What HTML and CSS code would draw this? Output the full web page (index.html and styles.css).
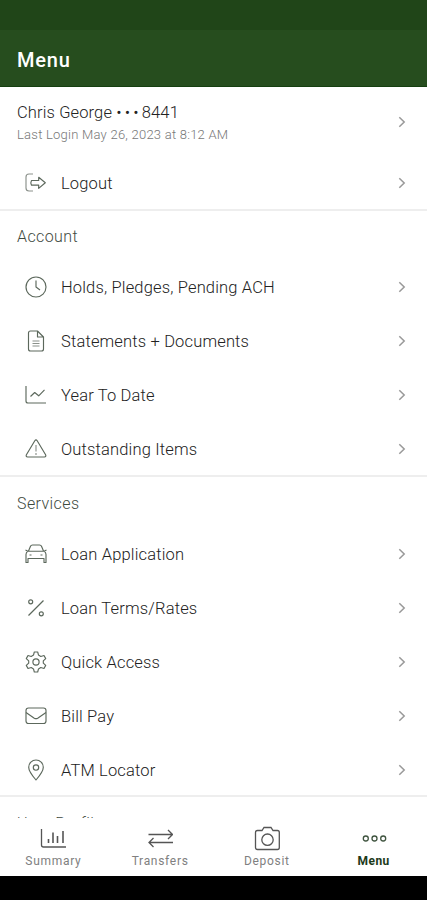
FILE: index.html
```html
<!DOCTYPE html>
<html lang="en">
<head>
<meta charset="utf-8">
<title>Menu</title>
<link rel="stylesheet" href="styles.css">
</head>
<body>
<svg class="defs" width="0" height="0">
  <symbol id="chev" viewBox="0 0 8 12"><path d="M1.3 1.2 6.2 6 1.3 10.8"/></symbol>
</svg>
<div class="app">
  <div class="status"></div>
  <header class="bar"><h1>Menu</h1></header>
  <main class="content">
    <section class="first">
      <div class="user">
        <div class="who"><p class="name">Chris George <span class="dots">•••</span>8441</p><p class="login">Last Login May 26, 2023 at 8:12 AM</p></div>
        <svg class="chev"><use href="#chev"/></svg>
      </div>
      <div class="row"><svg class="icon" viewBox="0 0 22 22"><path class="soft" d="M8 2H4Q1 2 1 5v11q0 3 3 3h4"/><path d="M6.5 8.5h7.2V5.2l6.6 5.6-6.6 5.6v-3.3H6.5q-1.3-2.3 0-4.6z"/></svg><span class="label">Logout</span><svg class="chev"><use href="#chev"/></svg></div>
    </section>
    <section class="account">
      <h2>Account</h2>
      <div class="row"><svg class="icon" viewBox="0 0 22 22"><circle cx="11" cy="11" r="10"/><path d="M11 4.5V11l4 3"/></svg><span class="label">Holds, Pledges, Pending ACH</span><svg class="chev"><use href="#chev"/></svg></div>
      <div class="row"><svg class="icon" viewBox="0 0 22 22"><path d="M12.5 1H5.5Q3.5 1 3.5 3v16q0 2 2 2h11q2 0 2-2V7zM12.5 1v6h6"/><path class="soft" d="M7.5 11h7M7.5 13.5h7M7.5 16h7"/></svg><span class="label">Statements + Documents</span><svg class="chev"><use href="#chev"/></svg></div>
      <div class="row"><svg class="icon" viewBox="0 0 22 22"><path d="M1 2v15q0 2 2 2h18M5.5 12.5l4.2-4 4 3.3 5.8-6"/></svg><span class="label">Year To Date</span><svg class="chev"><use href="#chev"/></svg></div>
      <div class="row"><svg class="icon" viewBox="0 0 22 22"><path d="M9.8 2.7q1.2-1.8 2.4 0l8.4 14q.9 2.1-1.2 2.3H2.6q-2.1-.2-1.2-2.3z"/><path class="soft" d="M11 7v6.5M11 15v2"/></svg><span class="label">Outstanding Items</span><svg class="chev"><use href="#chev"/></svg></div>
    </section>
    <section class="services">
      <h2>Services</h2>
      <div class="row"><svg class="icon" viewBox="0 0 22 22"><path d="M3.500 8 5.500 3.200Q6 2 7.500 2h7q1.500 0 2 1.200L18.500 8M.5 7 3 8.200h16L21.500 7M3 8.200q-2 .8-2 3.300V19.500h2V15.500h16v4h2V11.500q0-2.500-2-3.300M4.500 12h2M15.500 12h2"/></svg><span class="label">Loan Application</span><svg class="chev"><use href="#chev"/></svg></div>
      <div class="row"><svg class="icon" viewBox="0 0 22 22"><path d="M18.500 3.500 3.500 18.500"/><circle cx="5.700" cy="4.800" r="2"/><circle cx="16.300" cy="16.800" r="2"/></svg><span class="label">Loan Terms/Rates</span><svg class="chev"><use href="#chev"/></svg></div>
      <div class="row"><svg class="icon" viewBox="0 0 22 22"><path d="M9.300 1h3.400l.8 3.100 2.300 1.400 3.200-1L20.700 7.600 18.300 9.800v2.400l2.400 2.200L19 17.500l-3.200-1-2.300 1.400-.8 3.100H9.300l-.8-3.100-2.300-1.400-3.200 1L1.300 14.400l2.400-2.200V9.800L1.300 7.600 3 4.500l3.200 1 2.300-1.400z"/><circle cx="11" cy="11" r="3.100"/></svg><span class="label">Quick Access</span><svg class="chev"><use href="#chev"/></svg></div>
      <div class="row"><svg class="icon" viewBox="0 0 22 22"><rect x="1" y="3" width="20" height="15.500" rx="2.500"/><path d="M1 7.500l8.300 5.700q1.700 1 3.400 0L21 7.500"/></svg><span class="label">Bill Pay</span><svg class="chev"><use href="#chev"/></svg></div>
      <div class="row"><svg class="icon" viewBox="0 0 22 22"><path d="M11 21Q3.700 12.500 3.700 8.200a7.300 7.200 0 0 1 14.600 0Q18.300 12.500 11 21z"/><circle cx="11" cy="8.500" r="2.700"/></svg><span class="label">ATM Locator</span><svg class="chev"><use href="#chev"/></svg></div>
    </section>
    <section><h2>User Profile</h2></section>
  </main>
  <nav class="tabs">
    <div class="tab"><svg viewBox="0 0 26 26"><path d="M1.500 3v16q0 2 2 2H26"/><path class="bars" d="M8.500 13v4M13 6.500V17M17.500 10v7M23 5v12"/></svg><span>Summary</span></div>
    <div class="tab"><svg viewBox="0 0 26 26"><path d="M1.500 8.500h24M21 4l4.500 4.500-4.500 4.500M26 16.500H2M6.500 12 2 16.500 6.500 21"/></svg><span>Transfers</span></div>
    <div class="tab"><svg viewBox="0 0 26 26"><path d="M3.500 4.500h4.500L10 1.500h7l2 3h4.500q1.800 0 1.800 2V21.500q0 2-1.800 2h-20q-2 0-2-2V6.500q0-2 2-2z"/><circle cx="13.500" cy="13.700" r="5.700"/></svg><span>Deposit</span></div>
    <div class="tab active"><svg viewBox="0 0 26 26"><circle cx="4.800" cy="12.500" r="2.500"/><circle cx="13.500" cy="12.500" r="2.500"/><circle cx="22.200" cy="12.500" r="2.500"/></svg><span>Menu</span></div>
  </nav>
  <div class="system"></div>
</div>
</body>
</html>
```
FILE: styles.css
```css
* { box-sizing: border-box; }
body { margin: 0; background: #fff; font-family: Roboto, "Liberation Sans", sans-serif; }
h1, h2, p { margin: 0; }
.defs { display: block; }
.app { display: flex; flex-direction: column; height: 900px; overflow: hidden; }
.status { flex: none; height: 30px; background: #204518; }
.bar { flex: none; display: flex; align-items: center; height: 57px; padding: 4px 17px 0; background: #264d1e; border-bottom: 1px solid #153f10; }
h1 { color: #fff; font-size: 20px; font-weight: 500; letter-spacing: .8px; }
.content { flex: none; height: 731px; overflow: hidden; }
section { border-bottom: 2px solid #eee; }
section.first { height: 124px; }
section.account { height: 266px; }
section.services { height: 320px; }
h2 { height: 50px; padding-left: 17px; color: #3f4b3f; font-size: 16px; line-height: 53px; font-weight: 300; letter-spacing: .4px; }
.account h2 { height: 49px; line-height: 52px; }
.user { display: flex; align-items: center; justify-content: space-between; height: 69px; padding: 0 20px 0 17px; }
.name { color: #222; font-size: 16.5px; line-height: 22px; font-weight: 300; white-space: pre; padding-top: 4px; letter-spacing: .12px; }
.dots { letter-spacing: 3.2px; }
.login { color: #777; font-size: 13px; line-height: 22px; font-weight: 300; letter-spacing: .24px; }
.row { display: flex; align-items: center; height: 54px; padding: 0 20px 0 25px; }
.icon { width: 22px; height: 22px; margin-right: 14px; fill: none; stroke: #5c685c; stroke-width: 1.15; stroke-linejoin: round; }
.soft { stroke: #8b918b; }
.label { flex: 1; color: #222; font-size: 16.5px; font-weight: 300; letter-spacing: .16px; }
.chev { width: 8px; height: 12px; fill: none; stroke: #999; stroke-width: 1.5; margin-right: 1px; }
.tabs { flex: none; display: grid; grid-template-columns: repeat(4, 1fr); height: 58px; padding-top: 8px; }
.tab { display: flex; flex-direction: column; align-items: center; color: #808080; font-size: 12px; line-height: 16px; letter-spacing: .7px; }
.tab svg { width: 26px; height: 26px; margin-bottom: 1px; fill: none; stroke: #555; stroke-width: 1.3; }
.tab .bars { stroke-width: 1.6; }
.tab.active { color: #1d3a19; font-weight: 700; letter-spacing: .5px; }
.tab.active svg { stroke: #405540; }
.system { flex: none; height: 24px; background: #000; }
```
